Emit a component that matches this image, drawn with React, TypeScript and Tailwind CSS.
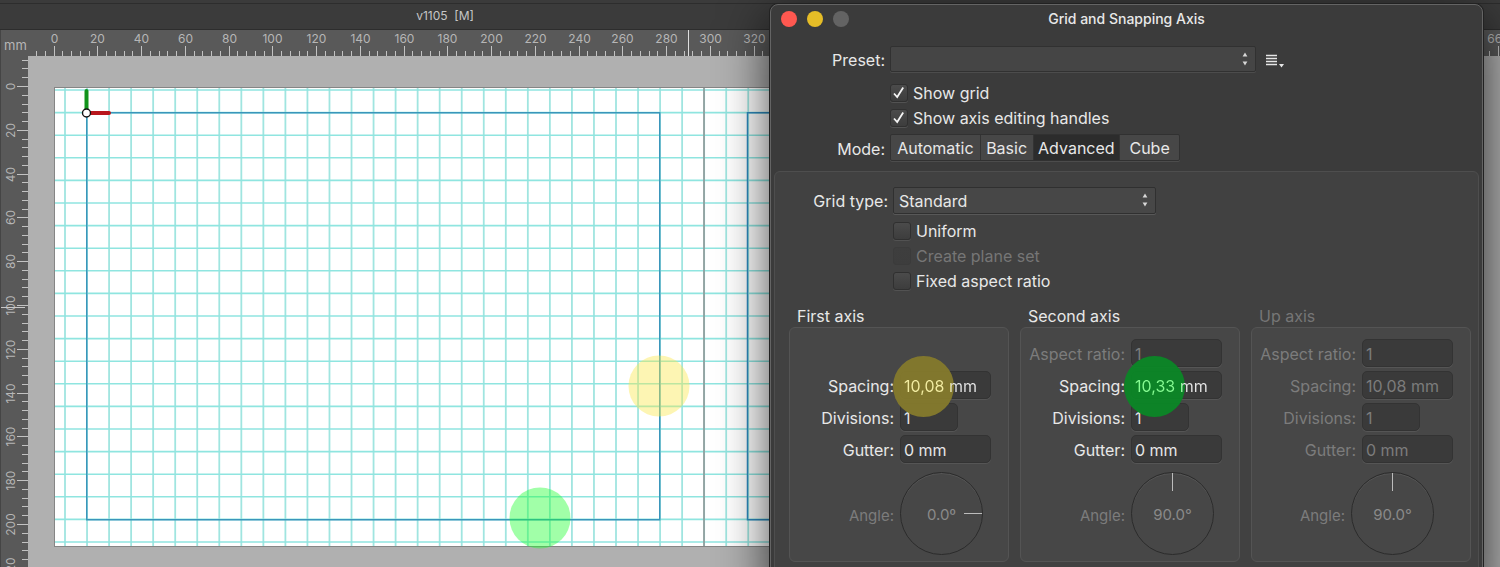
import React, { useState } from 'react';

const PX_PER_MM = 2.188;

const MODES = ['Automatic', 'Basic', 'Advanced', 'Cube'];

const range = (from: number, to: number, step: number) => {
  const out: number[] = [];
  for (let v = from; v <= to; v += step) out.push(v);
  return out;
};

function HorizontalRuler() {
  const origin = 26;
  return (
    <svg className="h-[26px] min-w-0 flex-1" aria-hidden="true">
      {range(-12, 660, 4).map(mm => {
        const x = Math.floor(origin + mm * PX_PER_MM) + 0.5;
        const major = mm % 20 === 0;
        return (
          <g key={mm}>
            <line x1={x} x2={x} y1={major ? 16 : 21} y2={26} stroke="#c2c2c2" strokeWidth={1} />
            {major && (
              <text x={x} y={13} textAnchor="middle" fontSize={12} fill="#b6b6b6">{mm}</text>
            )}
          </g>
        );
      })}
      <line x1={660.5} x2={660.5} y1={0} y2={26} stroke="#dedede" />
    </svg>
  );
}

function VerticalRuler() {
  const origin = 30;
  return (
    <svg className="w-7 shrink-0 bg-[#595959]" aria-hidden="true">
      {range(-12, 240, 4).map(mm => {
        const y = Math.round(origin + mm * 2.19) + 0.5;
        const major = mm % 20 === 0;
        return (
          <g key={mm}>
            <line x1={major ? 17 : 22} x2={28} y1={y} y2={y} stroke="#c2c2c2" strokeWidth={1} />
            {major && (
              <text transform={`translate(15 ${y}) rotate(-90)`} textAnchor="middle" fontSize={12} fill="#b6b6b6">{mm}</text>
            )}
          </g>
        );
      })}
      <line x1={1} x2={25} y1={251.5} y2={251.5} stroke="#c8c8c8" />
      <line x1={0.5} x2={0.5} y1={0} y2="100%" stroke="#454545" />
    </svg>
  );
}

function Artboard() {
  return (
    <svg className="min-w-0 flex-1" role="img" aria-label="Document page with grid">
      <rect x={26.5} y={31.5} width={1299} height={459} fill="#ffffff" stroke="#858585" />
      {range(0, 58, 1).map(i => {
        const x = 37 + i * 22.04;
        return <line key={i} x1={x} x2={x} y1={32} y2={490} stroke="#a0e5e0" strokeWidth={1.8} />;
      })}
      {range(0, 20, 1).map(i => {
        const y = 34 + i * 22.6;
        return <line key={i} x1={27} x2={1325} y1={y} y2={y} stroke="#8fe5e0" strokeWidth={1.6} />;
      })}
      <line x1={676} x2={676} y1={32} y2={490} stroke="#8c8c8c" strokeWidth={1.4} />
      <rect x={58.75} y={56.75} width={573} height={407} fill="none" stroke="#3a96bb" strokeWidth={1.5} />
      <rect x={719.5} y={56.75} width={573} height={407} fill="none" stroke="#2f8abf" strokeWidth={1.5} />
      {/* axis handles */}
      <line x1={58.5} x2={58.5} y1={35} y2={53} stroke="#11931b" strokeWidth={4} strokeLinecap="round" />
      <line x1={62} x2={81} y1={57} y2={57} stroke="#b8161c" strokeWidth={4} strokeLinecap="round" />
      <circle cx={58.5} cy={57} r={4} fill="#ffffff" stroke="#111111" strokeWidth={1.4} />
      {/* spacing highlights */}
      <circle cx={631} cy={330} r={30.5} fill="#fbe84a" fillOpacity={0.42} />
      <circle cx={512} cy={462} r={30.5} fill="#20ff30" fillOpacity={0.42} />
    </svg>
  );
}

function Stepper() {
  return (
    <svg viewBox="0 0 6 14" className="pointer-events-none absolute right-2 top-1.5 h-3.5 w-1.5" fill="#d6d6d6" aria-hidden="true">
      <path d="M3 0.5 5.4 4.5H0.6zM3 13.5 5.4 9.5H0.6z" />
    </svg>
  );
}

interface CheckboxProps {
  label: string;
  defaultChecked?: boolean;
  disabled?: boolean;
}

function Checkbox({ label, defaultChecked, disabled }: CheckboxProps) {
  return (
    <label className={`flex h-[25px] items-center gap-[5px] ${disabled ? 'text-[#767676]' : ''}`}>
      <span className="relative flex">
        <input
          type="checkbox"
          defaultChecked={defaultChecked}
          disabled={disabled}
          className="peer h-[18px] w-[18px] appearance-none rounded-[3px] border border-[#303030] bg-linear-to-b from-[#4b4b4b] to-[#3d3d3d] shadow-[0_1px_0_#525252] disabled:border-[#3b3b3b] disabled:from-[#3e3e3e] disabled:shadow-none"
        />
        <svg viewBox="0 0 18 18" className="pointer-events-none absolute inset-0 hidden h-[18px] w-[18px] peer-checked:block" fill="none" stroke="#f4f4f4" strokeWidth={1.8} aria-hidden="true">
          <path d="M4 9.5 7.2 13 13.2 3.5" />
        </svg>
      </span>
      {label}
    </label>
  );
}

interface FieldProps {
  id: string;
  label: string;
  value: string;
  disabled?: boolean;
  narrow?: boolean;
  highlight?: 'yellow' | 'green';
}

function Field({ id, label, value, disabled, narrow, highlight }: FieldProps) {
  const textColor = highlight === 'yellow'
    ? 'bg-[linear-gradient(to_right,#f3eda2_50px,#e6e6e6_50px)] bg-clip-text text-transparent'
    : highlight === 'green'
      ? 'bg-[linear-gradient(to_right,#86fb92_50px,#e6e6e6_50px)] bg-clip-text text-transparent'
      : disabled ? 'text-[#7c7c7c]' : 'text-[#e6e6e6]';

  return (
    <>
      <label htmlFor={id} className={`pt-0.5 text-right ${disabled ? 'text-[#7c7c7c]' : ''}`}>{label}</label>
      <div className={`relative h-7 rounded-[5px] border border-[#333333] bg-[#3a3a3a] shadow-[0_1px_0_#555555] ${narrow ? 'w-[58px]' : 'w-[91px]'}`}>
        {highlight && (
          <span className={`absolute -left-2 -top-4 z-10 h-[61px] w-[61px] rounded-full ${highlight === 'yellow' ? 'bg-[#857a2c]/95' : 'bg-[#0b8726]/95'}`} />
        )}
        <input
          id={id}
          defaultValue={value}
          disabled={disabled}
          className={`h-full w-full pl-[3px] pt-0.5 outline-none ${highlight ? 'relative z-20' : ''} ${textColor}`}
        />
      </div>
    </>
  );
}

interface AxisProps {
  id: string;
  title: string;
  spacing: string;
  angle: string;
  aspect?: boolean;
  disabled?: boolean;
  highlight?: 'yellow' | 'green';
}

function AxisGroup({ id, title, spacing, angle, aspect, disabled, highlight }: AxisProps) {
  return (
    <fieldset className="min-w-0 flex-1">
      <legend className={`h-[22px] pl-2 leading-[22px] ${disabled ? 'text-[#767676]' : ''}`}>{title}</legend>
      <div className="rounded-md border border-[#545454] bg-[#474747] pb-1.5 pt-[11px]">
        <div className="grid grid-cols-[104px_1fr] items-center gap-x-1.5 gap-y-1">
          {aspect
            ? <Field id={`${id}-aspect`} label="Aspect ratio:" value="1" disabled />
            : <div className="col-span-2 h-7" />}
          <Field id={`${id}-spacing`} label="Spacing:" value={spacing} disabled={disabled} highlight={highlight} />
          <Field id={`${id}-divisions`} label="Divisions:" value="1" disabled={disabled} narrow />
          <Field id={`${id}-gutter`} label="Gutter:" value="0 mm" disabled={disabled} />
        </div>
        <div className={`mt-[9px] grid items-center gap-x-1.5 text-[15px] text-[#7c7c7c] ${disabled ? 'grid-cols-[93px_1fr]' : 'grid-cols-[104px_1fr]'}`}>
          <label htmlFor={`${id}-angle`} className="pt-1 text-right">Angle:</label>
          <div className="relative h-[83px] w-[83px]">
            <input
              id={`${id}-angle`}
              defaultValue={angle}
              disabled
              className="h-full w-full rounded-full border border-[#2b2b2b] pt-0.5 text-center text-[#8a8a8a] shadow-[inset_0_1px_0_#565656]"
            />
            {angle.startsWith('0')
              ? <span className="absolute right-px top-[41px] h-px w-[18px] bg-[#bcbcbc]" />
              : <span className="absolute left-[41px] top-px h-[18px] w-px bg-[#bcbcbc]" />}
          </div>
        </div>
      </div>
    </fieldset>
  );
}

function GridDialog() {
  const [mode, setMode] = useState('Advanced');

  return (
    <section
      role="dialog"
      aria-labelledby="dialog-title"
      className="absolute right-[17px] top-1 w-[713px] rounded-t-lg border border-[#646464] bg-[#3b3b3b] px-[3px] pb-3 text-base leading-5 text-[#e8e8e8] shadow-[0_0_0_1px_#222222,0_14px_50px_rgba(0,0,0,0.75)]"
    >
      <header className="relative flex h-7 items-center justify-center">
        <div className="absolute left-[7px] flex gap-2.5">
          <button aria-label="Close" className="h-4 w-4 rounded-full bg-[#ff5850]" />
          <button aria-label="Minimize" className="h-4 w-4 rounded-full bg-[#e6bd27]" />
          <button aria-label="Zoom" className="h-4 w-4 rounded-full bg-[#636363]" disabled />
        </div>
        <h1 id="dialog-title" className="text-sm font-medium">Grid and Snapping Axis</h1>
      </header>

      <div className="mt-[13px] grid grid-cols-[111px_1fr] items-center gap-x-[5px]">
        <label htmlFor="preset" className="pt-0.5 text-right">Preset:</label>
        <div className="flex items-center">
          <div className="relative">
            <select id="preset" className="block h-[26px] w-[366px] appearance-none rounded-xs border border-[#313131] bg-[#454545] shadow-[0_1px_0_#4c4c4c]">
              <option value="" />
            </select>
            <Stepper />
          </div>
          <button aria-label="Preset options" className="ml-2.5 pt-1">
            <svg width="18" height="14" viewBox="0 0 18 14" aria-hidden="true">
              <path d="M0 1.5h11M0 4.5h11M0 7.5h11M0 10.5h11" stroke="#e6e6e6" strokeWidth={1.4} />
              <path d="M13 10h5l-2.5 3.5z" fill="#e6e6e6" />
            </svg>
          </button>
        </div>

        <div className="col-start-2 mt-2 pb-1">
          <Checkbox label="Show grid" defaultChecked />
          <Checkbox label="Show axis editing handles" defaultChecked />
        </div>

        <span id="mode-label" className="pt-0.5 text-right">Mode:</span>
        <div role="group" aria-labelledby="mode-label" className="grid h-[27px] w-[290px] grid-cols-[90fr_53fr_87fr_59fr] divide-x divide-[#333333] rounded-xs border border-[#313131] bg-[#474747] shadow-[0_1px_0_#4c4c4c]">
          {MODES.map(m => (
            <button
              key={m}
              onClick={() => setMode(m)}
              aria-pressed={mode === m}
              className={mode === m ? 'bg-[#2c2c2c]' : ''}
            >
              {m}
            </button>
          ))}
        </div>
      </div>

      <div className="mt-2.5 rounded-t-md border border-[#4e4e4e] bg-[#414141] pb-5 pl-3.5 pr-[7px] pt-[15px]">
        <div className="grid grid-cols-[99px_1fr] items-center gap-x-[5px]">
          <label htmlFor="grid-type" className="text-right">Grid type:</label>
          <div className="relative w-[263px]">
            <select id="grid-type" className="block h-[27px] w-full appearance-none rounded-xs border border-[#303030] bg-[#474747] px-[5px] shadow-[0_1px_0_#585858]">
              <option>Standard</option>
            </select>
            <Stepper />
          </div>
          <div className="col-start-2 mt-1">
            <Checkbox label="Uniform" />
            <Checkbox label="Create plane set" disabled />
            <Checkbox label="Fixed aspect ratio" />
          </div>
        </div>

        <div className="mt-3 flex gap-[11px]">
          <AxisGroup id="first" title="First axis" spacing="10,08 mm" angle="0.0º" highlight="yellow" />
          <AxisGroup id="second" title="Second axis" spacing="10,33 mm" angle="90.0°" aspect highlight="green" />
          <AxisGroup id="up" title="Up axis" spacing="10,08 mm" angle="90.0°" aspect disabled />
        </div>
      </div>
    </section>
  );
}

export default function App() {
  return (
    <main className="relative flex h-screen flex-col overflow-hidden bg-[#b0b0b0] font-['Inter',sans-serif]">
      <header className="h-[30px] shrink-0 border-b border-[#2d2d2d] bg-[#3b3b3b] pt-[3px]">
        <div className="border-t border-[#2d2d2d]">
          <h2 className="w-[890px] whitespace-pre text-center text-xs leading-6 text-[#c6c6c6]">v1105  [M]</h2>
        </div>
      </header>
      <div className="flex h-[26px] shrink-0 bg-[#595959]">
        <div className="w-7 shrink-0 border-l border-[#454545] pl-[3px] pt-[5px] text-[13px] leading-5 text-[#b6b6b6]">mm</div>
        <HorizontalRuler />
      </div>
      <div className="flex min-h-0 flex-1">
        <VerticalRuler />
        <Artboard />
      </div>
      <GridDialog />
    </main>
  );
}
